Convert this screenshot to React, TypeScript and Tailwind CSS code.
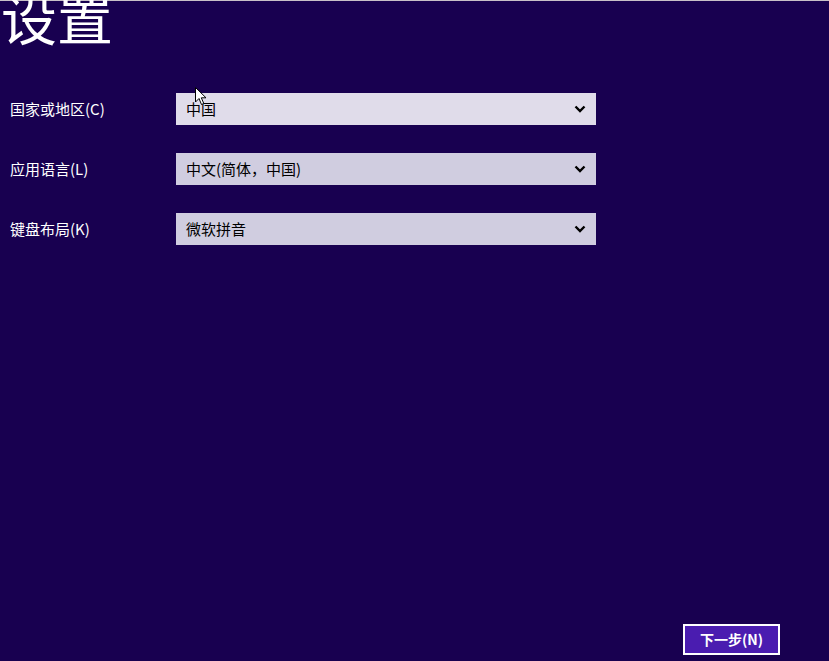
const font = "font-['Segoe_UI','Noto_Sans_CJK_SC',sans-serif]";

type Row = { label: string; value: string; light?: boolean };

const rows: Row[] = [
  { label: "国家或地区(C)", value: "中国", light: true },
  { label: "应用语言(L)", value: "中文(简体，中国)" },
  { label: "键盘布局(K)", value: "微软拼音" },
];

function Chevron() {
  return (
    <svg width="12" height="8" viewBox="0 0 12 8" className="mr-[10px]">
      <path d="M1.5 1.5 L6 6 L10.5 1.5" fill="none" stroke="#000" strokeWidth="2.4" />
    </svg>
  );
}

function Cursor() {
  return (
    <svg width="14" height="20" viewBox="0 0 14 20" className="absolute left-[195px] top-[87px]">
      <path d="M0.5 0.5 L0.5 15 L4 11.5 L6.5 17.5 L8.8 16.5 L6.3 10.8 L11 10.8 Z" fill="#fff" stroke="#000" strokeWidth="1" />
    </svg>
  );
}

export default function App() {
  return (
    <div className={`relative w-[829px] h-[661px] overflow-hidden bg-[#180050] ${font}`}>
      <div className="h-px bg-[#c8c0c8]" />
      <h1 className="text-white text-[56px] leading-none mt-[-13px] ml-[1px] font-normal">设置</h1>
      <div className="mt-[49px] flex flex-col gap-[28px]">
        {rows.map((r) => (
          <div key={r.label} className="flex items-center h-[32px]">
            <div className="w-[176px] pl-[10px] text-white text-[15px]">{r.label}</div>
            <div
              className={`w-[420px] h-[32px] flex items-center justify-between pl-[10px] text-[15px] text-black ${
                r.light ? "bg-[#e0dcea]" : "bg-[#d0cde0]"
              }`}
            >
              <span>{r.value}</span>
              <Chevron />
            </div>
          </div>
        ))}
      </div>
      <div className="absolute left-[683px] top-[624px] w-[97px] h-[31px] border-2 border-white bg-[#4a1cb0] flex items-center justify-center text-white text-[14px] font-bold">
        下一步(N)
      </div>
      <Cursor />
    </div>
  );
}
